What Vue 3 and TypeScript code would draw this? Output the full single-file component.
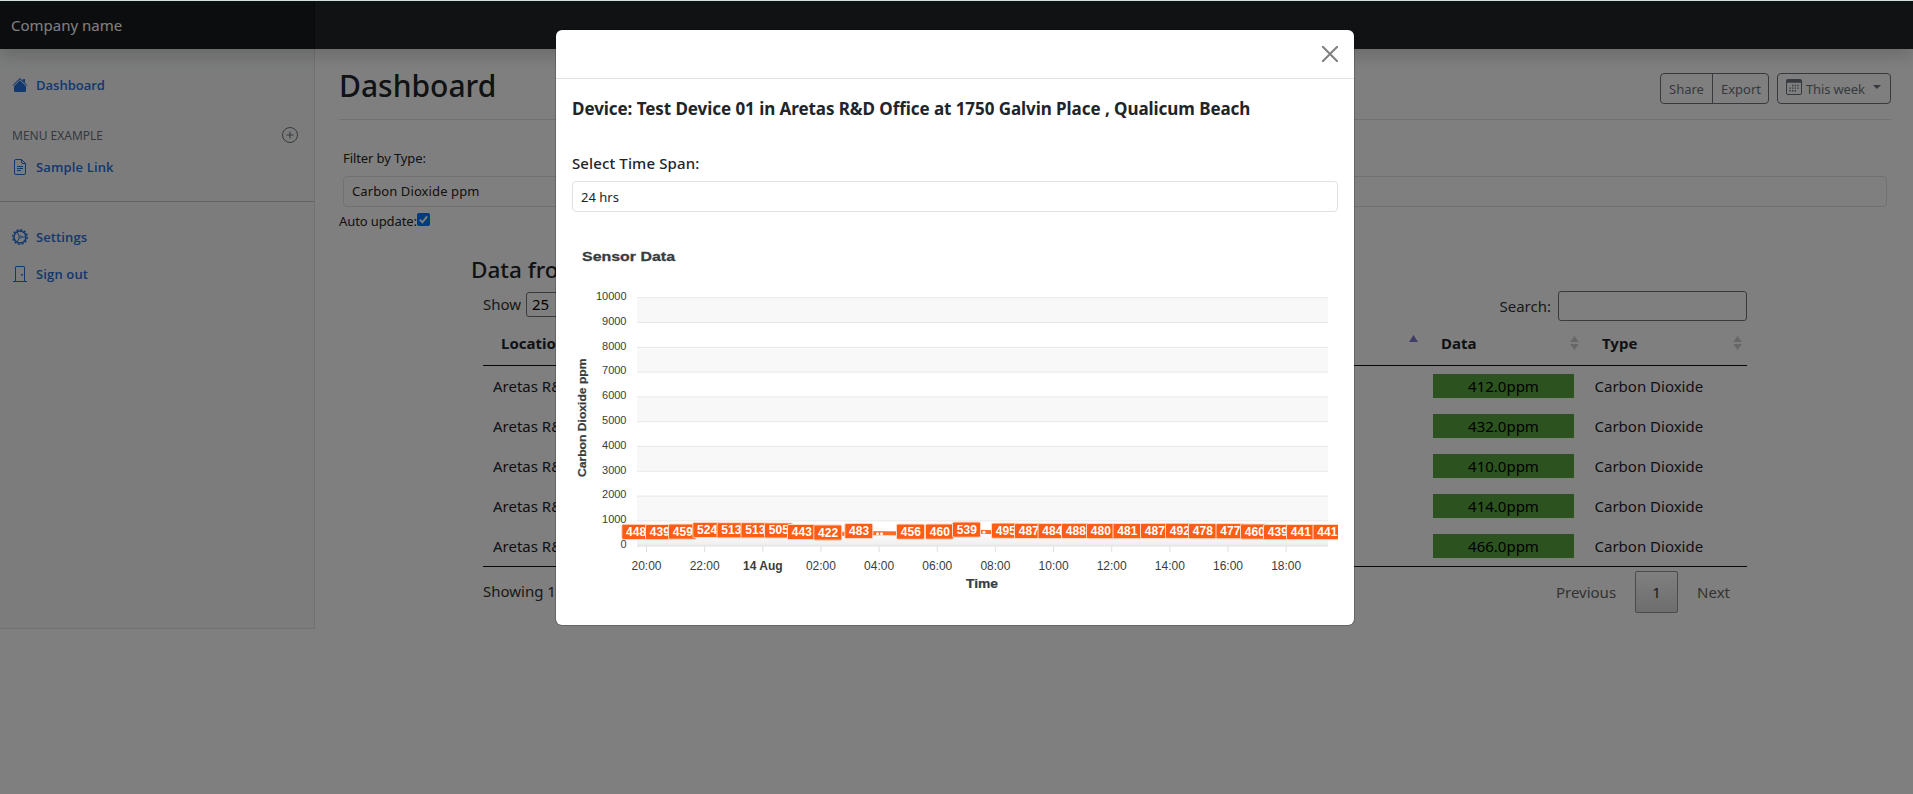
<script setup lang="ts">
interface Point { x: number; v: number }

const rows: string[] = ['412.0ppm', '432.0ppm', '410.0ppm', '414.0ppm', '466.0ppm']

const points: Point[] = ([
  [622.3, 448], [646, 439], [669, 459], [693.3, 524], [717.5, 513], [741.5, 513], [765, 505],
  [788, 443], [814.3, 422], [845.3, 483], [897, 456], [926, 460], [953, 539], [992, 495],
  [1015, 487], [1038.5, 484], [1062, 488], [1087, 480], [1113.5, 481], [1141, 487], [1166, 492],
  [1189, 478], [1216.5, 477], [1241, 460], [1264, 439], [1287, 441], [1313.5, 441],
] as [number, number][]).map(([x, v]) => ({ x: x - 572, v }))

const top = 57.7
const step = 24.8
const yOf = (v: number): number => top + (10000 - v) * step / 1000
const yTicks: number[] = Array.from({ length: 11 }, (_, i) => 10000 - i * 1000)
const xTicks: string[] = ['20:00', '22:00', '14 Aug', '02:00', '04:00', '06:00', '08:00', '10:00', '12:00', '14:00', '16:00', '18:00']
const line: string = points.map(p => `${p.x + 14},${yOf(p.v) - 0.8}`).join(' ')
</script>

<template>
  <div class="page">
    <header class="navbar"><div class="brand"><span>Company name</span></div></header>
    <div class="layout">
      <nav class="sidebar">
        <a class="link l1">
          <svg viewBox="0 0 16 16"><path d="M8 3.3l6 6V13.500a1.500 1.500 0 0 1-1.500 1.500h-9A1.500 1.500 0 0 1 2 13.500V9.300l6-6zm5-.8V6l-2-2V2.500a.5.5 0 0 1 .5-.5h1a.5.5 0 0 1 .5.5z" /><path d="M7.300 1.500a1 1 0 0 1 1.400 0l6.650 6.650-.7.7L8 2.200 1.350 8.850l-.7-.7z" /></svg>
          Dashboard
        </a>
        <div class="heading">
          <span>MENU EXAMPLE</span>
          <svg viewBox="0 0 16 16" fill="none" stroke="currentColor"><circle cx="8" cy="8" r="7.500" /><path d="M8 4.500v7M4.500 8h7" /></svg>
        </div>
        <a class="link l2">
          <svg viewBox="0 0 16 16" fill="none" stroke="currentColor"><path d="M9.500.5H4a1.500 1.500 0 0 0-1.500 1.500v12A1.500 1.500 0 0 0 4 15.500h8a1.500 1.500 0 0 0 1.500-1.500V4.500zM9.500.5V3A1.500 1.500 0 0 0 11 4.500h2.500M5 7.500h6M5 9.500h6M5 11.500h4" /></svg>
          Sample Link
        </a>
        <div class="rule" />
        <a class="link l3">
          <svg viewBox="0 0 16 16" fill="none" stroke="currentColor"><circle cx="8" cy="8" r="6" stroke-width="1.500" /><circle cx="8" cy="8" r="7.300" stroke-width="1.400" stroke-dasharray="2.200 1.620" /><path d="M8 8l-3-5M8 8l-3 5M8 8h6" /><circle cx="8" cy="8" r="1.300" fill="#f8f9fa" stroke-width=".8" /></svg>
          Settings
        </a>
        <a class="link l4">
          <svg viewBox="0 0 16 16" fill="none" stroke="currentColor"><path d="M3.500 15.500V1A.5.5 0 0 1 4 .5h8a.5.5 0 0 1 .5.500v14.500M1 15.500h14" /><circle cx="10" cy="8.800" r=".6" fill="currentColor" /></svg>
          Sign out
        </a>
      </nav>
      <main class="main">
        <div class="titlebar">
          <h1>Dashboard</h1>
          <div class="tools">
            <div class="group"><button>Share</button><button>Export</button></div>
            <button class="week">
              <svg viewBox="0 0 16 16"><path fill-rule="evenodd" d="M2 0h12a2 2 0 0 1 2 2v12a2 2 0 0 1-2 2H2a2 2 0 0 1-2-2V2a2 2 0 0 1 2-2zm-1 3.800V14a1 1 0 0 0 1 1h12a1 1 0 0 0 1-1V3.800z" /><path d="M6 5.800h1.400v1.400H6zM8.600 5.800H10v1.400H8.600zM11.200 5.800h1.400v1.400h-1.400zM3.400 8.400h1.400v1.400H3.400zM6 8.400h1.400v1.400H6zM8.600 8.400H10v1.400H8.600zM11.200 8.400h1.400v1.400h-1.400zM3.400 11h1.400v1.400H3.400zM6 11h1.400v1.400H6zM8.600 11H10v1.400H8.600z" /></svg>
              <span>This week</span><i />
            </button>
          </div>
        </div>
        <div class="filter-label">Filter by Type:</div>
        <div class="select">Carbon Dioxide ppm</div>
        <div class="auto">
          <span>Auto update:</span>
          <svg viewBox="0 0 13 13"><rect width="13" height="13" rx="2" fill="#0075ff" /><path d="M2.800 6.600l2.600 2.700 4.700-6" fill="none" stroke="#fff" stroke-width="1.900" /></svg>
        </div>
        <section class="data">
          <h2>Data from</h2>
          <div class="controls">
            <div class="length">Show <span class="len-box">25</span></div>
            <div class="search"><span>Search:</span><span class="search-box" /></div>
          </div>
          <div class="thead">
            <div class="c1">Location</div>
            <div class="c2"><svg width="9" height="7"><path d="M4.500 0L9 7H0z" fill="#7b7bd0" /></svg></div>
            <div class="c3">Data<svg width="9" height="14"><path d="M4.500 0L9 6H0zM0 8h9l-4.500 6z" fill="#d0d0d0" /></svg></div>
            <div class="c4">Type<svg width="9" height="14"><path d="M4.500 0L9 6H0zM0 8h9l-4.500 6z" fill="#d0d0d0" /></svg></div>
          </div>
          <div v-for="r in rows" :key="r" class="row">
            <div class="c1">Aretas R&amp;D</div>
            <div class="c2" />
            <div class="c3"><div class="badge">{{ r }}</div></div>
            <div class="c4">Carbon Dioxide</div>
          </div>
          <div class="foot">
            <span class="info">Showing 1</span>
            <div class="pager"><span>Previous</span><b>1</b><span class="next">Next</span></div>
          </div>
        </section>
      </main>
    </div>
    <div class="backdrop">
      <div class="modal">
        <div class="mhead"><svg viewBox="0 0 16 16"><path d="M.8.8l14.400 14.400M15.200.8L.8 15.200" stroke="#7f7f7f" stroke-width="2" stroke-linecap="round" /></svg></div>
        <div class="mbody">
          <h3><span>Device: Test Device 01 in Aretas R&amp;D Office at 1750 Galvin Place , Qualicum Beach</span></h3>
          <label>Select Time Span:</label>
          <div class="mselect">24 hrs</div>
          <svg class="chart" width="766" height="370" viewBox="0 0 766 370">
            <defs><linearGradient id="fade" x1="0" y1="0" x2="0" y2="1"><stop offset="0" stop-color="#fff" /><stop offset="1" stop-color="#eee" /></linearGradient></defs>
            <text x="10" y="20.500" class="ctitle" textLength="93" lengthAdjust="spacingAndGlyphs">Sensor Data</text>
            <rect v-for="i in 5" :key="i" x="65" :y="top + (i - 1) * 2 * step" width="691" :height="step" fill="#f8f8f8" />
            <rect x="65" :y="yOf(600)" width="691" height="14.900" fill="url(#fade)" />
            <g v-for="t in yTicks" :key="t">
              <line x1="65" x2="756" :y1="yOf(t)" :y2="yOf(t)" stroke="#e8e8e8" :stroke-width="t ? 1 : 2" />
              <text x="54.500" :y="yOf(t) + 2.300" class="tick" text-anchor="end">{{ t }}</text>
            </g>
            <g v-for="(t, i) in xTicks" :key="t">
              <line :x1="74.500 + i * 58.150" :x2="74.500 + i * 58.150" y1="306" y2="312" stroke="#e0e0e0" />
              <text :x="74.500 + i * 58.150" y="330" :class="['xtick', { day: t === '14 Aug' }]" text-anchor="middle">{{ t }}</text>
            </g>
            <text x="394" y="347.700" class="axis" textLength="32" lengthAdjust="spacingAndGlyphs">Time</text>
            <text transform="translate(13.500 237) rotate(-90)" class="axis side" textLength="118.500" lengthAdjust="spacingAndGlyphs">Carbon Dioxide ppm</text>
            <polyline :points="line" fill="none" stroke="#ff6a2a" stroke-width="4" />
            <g fill="#fff"><circle cx="305.500" cy="293.800" r="1.500" /><circle cx="309.500" cy="293.800" r="1.500" /><circle cx="412" cy="292.300" r="1.500" /></g>
            <g v-for="(p, i) in points" :key="i">
              <rect :x="p.x - .5" :y="yOf(p.v) - 10.300" width="28" height="15.200" rx="1.500" fill="#ff5c14" stroke="#ffd9c8" stroke-width="1" />
              <text :x="p.x + 13.800" :y="yOf(p.v) + 1.300" class="val" text-anchor="middle">{{ p.v }}</text>
            </g>
          </svg>
        </div>
      </div>
    </div>
  </div>
</template>

<style>
body { margin: 0; overflow: hidden; }
</style>

<style scoped>
* { box-sizing: border-box; }
.page { position: relative; width: 1913px; height: 794px; overflow: hidden; background: #fff; border-top: 1px solid #d5dede; font-family: "Noto Sans", "Open Sans", sans-serif; font-size: 15px; color: #212529; }
.navbar { position: relative; z-index: 1; height: 48px; background: #212529; box-shadow: 0 8px 16px rgba(0,0,0,.15); }
.brand { width: 315px; height: 48px; padding-left: 11px; line-height: 48px; background: rgba(0,0,0,.25); box-shadow: inset -1px 0 0 rgba(0,0,0,.25); color: #fff; }
.layout { display: flex; align-items: flex-start; }
.sidebar { width: 315px; height: 580px; background: #f8f9fa; border-right: 1px solid #dee2e6; border-bottom: 1px solid #dee2e6; }
.link { display: flex; align-items: center; height: 20px; padding-left: 12px; gap: 8px; font-family: "Open Sans", sans-serif; font-size: 13px; font-weight: 600; color: #2470dc; }
.link svg { width: 16px; height: 16px; fill: currentColor; }
.link svg[fill=none] { fill: none; }
.l1 { margin-top: 26px; }
.heading { display: flex; align-items: center; justify-content: space-between; height: 20px; margin-top: 30px; padding: 0 16px 0 12px; font-size: 12px; color: #6c757d; }
.heading svg { width: 16px; height: 16px; }
.l2 { margin-top: 12px; }
.l2, .l4 { letter-spacing: .15px; }
.rule { height: 1px; margin-top: 24px; background: #c4c6c8; }
.l3 { margin-top: 25px; letter-spacing: .1px; }
.l4 { margin-top: 17px; }
.main { flex: 1; padding: 0 22px 0 24px; }
.titlebar { display: flex; justify-content: space-between; height: 71px; padding-top: 24px; border-bottom: 1px solid #dee2e6; }
h1 { margin: -5px 0 0 0; font: 500 30px/36px "Noto Sans", sans-serif; }
.tools { display: flex; gap: 8px; height: 31px; }
.group { display: flex; }
.tools button { height: 31px; padding: 0 8px; border: 1px solid #6c757d; background: none; color: #6c757d; font: 13px "Noto Sans", sans-serif; white-space: nowrap; }
.group button:first-child { width: 53px; border-radius: 4px 0 0 4px; }
.group button:last-child { width: 57px; margin-left: -1px; border-radius: 0 4px 4px 0; }
.tools .week { display: flex; align-items: center; width: 114px; border-radius: 4px; }
.week svg { flex: none; width: 16px; height: 16px; margin: -3px 4px 0 0; fill: currentColor; }
.week span { letter-spacing: -.15px; }
.week i { margin: -4px 0 0 8px; border: 4px solid transparent; border-top-color: #6c757d; border-bottom: 0; }
.filter-label { margin: 28px 0 0 4px; height: 20px; line-height: 20px; font-size: 13px; letter-spacing: -.1px; }
.select { height: 31px; margin: 8px 4px 0 4px; padding-left: 8px; border: 1px solid #dee2e6; border-radius: 4px; line-height: 29px; font-size: 13px; letter-spacing: .1px; }
.auto { display: flex; height: 20px; margin-top: 4px; line-height: 20px; font-size: 13px; letter-spacing: -.1px; }
.auto svg { width: 13px; height: 13px; margin-top: 2px; }
.data { width: 1276px; margin: 24px 0 0 132px; }
h2 { margin: 0; height: 29px; font: 500 22.500px/29px "Noto Sans", sans-serif; }
.controls, .thead, .row, .foot { margin-left: 12px; width: 1264px; }
.controls { display: flex; justify-content: space-between; height: 42px; margin-top: 7px; color: #333; }
.length { margin-top: -1px; line-height: 28px; }
.len-box { display: inline-block; width: 60px; height: 25px; margin-left: 1px; padding-left: 5px; border: 1px solid #777; border-radius: 3px; line-height: 23px; color: #000; }
.search { display: flex; line-height: 30px; }
.search-box { width: 189px; height: 30px; margin-left: 7px; border: 1px solid #777; border-radius: 3px; }
.thead { display: flex; height: 33px; border-bottom: 1px solid #111; line-height: 21px; font-weight: 700; }
.c1 { width: 420px; padding-left: 10px; }
.c2 { width: 520px; }
.c3 { width: 161px; padding: 0 10px; }
.c4 { flex: 1; padding-left: 10.500px; }
.thead .c1 { padding-left: 18px; }
.thead .c2 { display: flex; justify-content: flex-end; padding: 2px 5px 0 0; }
.thead .c3, .thead .c4 { display: flex; justify-content: space-between; padding: 0 5px 0 18px; }
.thead .c3 svg, .thead .c4 svg { margin-top: 3px; }
.row { display: flex; align-items: center; height: 40px; }
.badge { height: 24px; line-height: 24px; text-align: center; background: #58a63f; color: #000; }
.foot { display: flex; justify-content: space-between; border-top: 1px solid #111; padding-top: 4px; color: #333; }
.info { line-height: 41px; }
.pager { display: flex; align-items: center; height: 42px; color: #666; }
.pager b { width: 43px; height: 42px; margin: 0 19px; border: 1px solid #979797; border-radius: 2px; background: linear-gradient(#fff, #dcdcdc); line-height: 40px; text-align: center; font-weight: 400; color: #333; }
.next { margin-right: 17px; }
.backdrop { position: absolute; inset: 0; z-index: 2; background: rgba(0,0,0,.5); }
.modal { width: 798px; height: 595px; margin: 29px 0 0 556px; background: #fff; border-radius: 6px; box-shadow: 0 0 0 1px rgba(0,0,0,.2); }
.mhead { display: flex; justify-content: flex-end; height: 49px; padding: 16px 16px 0 0; border-bottom: 1px solid #dee2e6; }
.mhead svg { width: 16px; height: 16px; }
.mbody { padding: 16px; }
h3 { margin: 0; height: 28px; font: 700 17px/28px "Noto Sans", sans-serif; letter-spacing: -.06px; white-space: nowrap; }
label { display: block; margin-top: 28px; height: 24px; line-height: 24px; font-weight: 500; letter-spacing: .12px; }
.mselect { height: 31px; margin-top: 6px; padding-left: 8px; border: 1px solid #dee2e6; border-radius: 4px; line-height: 30px; font-size: 13px; }
.chart { display: block; margin-top: 28px; font-family: "Liberation Sans", Arial, sans-serif; }
.ctitle { font-size: 13.500px; font-weight: 700; fill: #373d3f; stroke: #373d3f; stroke-width: .3; }
.axis { font-size: 12px; font-weight: 700; fill: #373d3f; stroke: #373d3f; stroke-width: .2; }
.side { font-size: 11px; }
.tick { font-size: 11px; fill: #373d3f; }
.xtick { font-size: 12px; fill: #373d3f; }
.day { font-weight: 700; }
.val { font-size: 12px; font-weight: 700; fill: #fff; }
</style>
